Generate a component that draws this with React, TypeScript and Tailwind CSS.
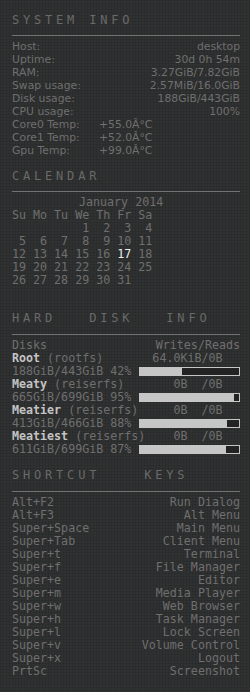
import React from 'react';

const mono = { fontFamily: '"DejaVu Sans Mono", "Liberation Mono", monospace' };
const sans = { fontFamily: '"DejaVu Sans", "Liberation Sans", sans-serif' };

const sysRows: [string, string][] = [
  ['Host:', 'desktop'],
  ['Uptime:', '30d 0h 54m'],
  ['RAM:', '3.27GiB/7.82GiB'],
  ['Swap usage:', '2.57MiB/16.0GiB'],
  ['Disk usage:', '188GiB/443GiB'],
  ['CPU usage:', '100%'],
];

const temps: [string, string][] = [
  ['Core0 Temp:', '+55.0Â°C'],
  ['Core1 Temp:', '+52.0Â°C'],
  ['Gpu Temp:', '+99.0Â°C'],
];

const disks = [
  { name: 'Root', fs: '(rootfs)', pad: '       ', io: '64.0KiB/0B', usage: '188GiB/443GiB 42%', pct: 42 },
  { name: 'Meaty', fs: '(reiserfs)', pad: '       ', io: '0B  /0B', usage: '665GiB/699GiB 95%', pct: 95 },
  { name: 'Meatier', fs: '(reiserfs)', pad: '     ', io: '0B  /0B', usage: '413GiB/466GiB 88%', pct: 88 },
  { name: 'Meatiest', fs: '(reiserfs)', pad: '    ', io: '0B  /0B', usage: '611GiB/699GiB 87%', pct: 87 },
];

const keys: [string, string][] = [
  ['Alt+F2', 'Run Dialog'],
  ['Alt+F3', 'Alt Menu'],
  ['Super+Space', 'Main Menu'],
  ['Super+Tab', 'Client Menu'],
  ['Super+t', 'Terminal'],
  ['Super+f', 'File Manager'],
  ['Super+e', 'Editor'],
  ['Super+m', 'Media Player'],
  ['Super+w', 'Web Browser'],
  ['Super+h', 'Task Manager'],
  ['Super+l', 'Lock Screen'],
  ['Super+v', 'Volume Control'],
  ['Super+x', 'Logout'],
  ['PrtSc', 'Screenshot'],
];

const Heading = ({ text, top }: { text: string; top: string }) => (
  <>
    <div style={mono} className={`${top} whitespace-pre text-[12px] leading-[13px] tracking-[3.8px] text-[#696a6a]`}>
      {text}
    </div>
    <div className="h-px bg-[#727272]" />
  </>
);

const Bar = ({ pct }: { pct: number }) => (
  <div className="flex-1 h-[9px] border border-[#c6c6c6] bg-[#232323]">
    <div className="h-full bg-[#c6c6c6]" style={{ width: `${pct}%` }} />
  </div>
);

export default function App() {
  return (
    <div className="w-[250px] h-[692px] overflow-hidden bg-[#303132] bg-[image:linear-gradient(90deg,rgba(0,0,0,0.09)_1px,transparent_1px),linear-gradient(rgba(0,0,0,0.09)_1px,transparent_1px)] bg-[size:3px_3px] pl-[12px] pr-[10px] text-[#6f6f6f]">
      {/* System */}
      <Heading text="SYSTEM INFO" top="pt-[14px] mb-[8px]" />
      <div style={sans} className="mt-[4px] text-[10.8px] leading-[13px]">
        {sysRows.map(([k, v]) => (
          <div key={k} className="flex justify-between">
            <span>{k}</span>
            <span>{v}</span>
          </div>
        ))}
        {temps.map(([k, v]) => (
          <div key={k} className="flex">
            <span className="w-[87px]">{k}</span>
            <span>{v}</span>
          </div>
        ))}
      </div>

      {/* Calendar */}
      <Heading text="CALENDAR" top="mt-[13px] mb-[8px]" />
      <div style={mono} className="mt-[4px] whitespace-pre text-[11.67px] leading-[13px]">
        <div className="pl-[67px]">January 2014</div>
        <div>Su Mo Tu We Th Fr Sa</div>
        <div>{'          1  2  3  4'}</div>
        <div>{' 5  6  7  8  9 10 11'}</div>
        <div>
          {'12 13 14 15 16 '}
          <span className="text-[#e8ecee]">17</span>
          {' 18'}
        </div>
        <div>19 20 21 22 23 24 25</div>
        <div>26 27 28 29 30 31</div>
      </div>

      {/* Disks */}
      <Heading text="HARD   DISK   INFO" top="mt-[25px] mb-[9px]" />
      <div style={mono} className="mt-[4px] whitespace-pre text-[11.67px] leading-[13px]">
        <div className="flex justify-between">
          <span>Disks</span>
          <span>Writes/Reads</span>
        </div>
        {disks.map((d) => (
          <React.Fragment key={d.name}>
            <div>
              <span className="font-bold text-[#c4c4c4]">{d.name}</span>
              {' ' + d.fs + d.pad + d.io}
            </div>
            <div className="flex items-center">
              <span className="w-[127px]">{d.usage}</span>
              <Bar pct={d.pct} />
            </div>
          </React.Fragment>
        ))}
      </div>

      {/* Shortcuts */}
      <Heading text="SHORTCUT    KEYS" top="mt-[13px] mb-[9px]" />
      <div style={mono} className="mt-[4px] whitespace-pre text-[11.67px] leading-[13px]">
        {keys.map(([k, v]) => (
          <div key={k} className="flex justify-between">
            <span>{k}</span>
            <span>{v}</span>
          </div>
        ))}
      </div>
    </div>
  );
}
